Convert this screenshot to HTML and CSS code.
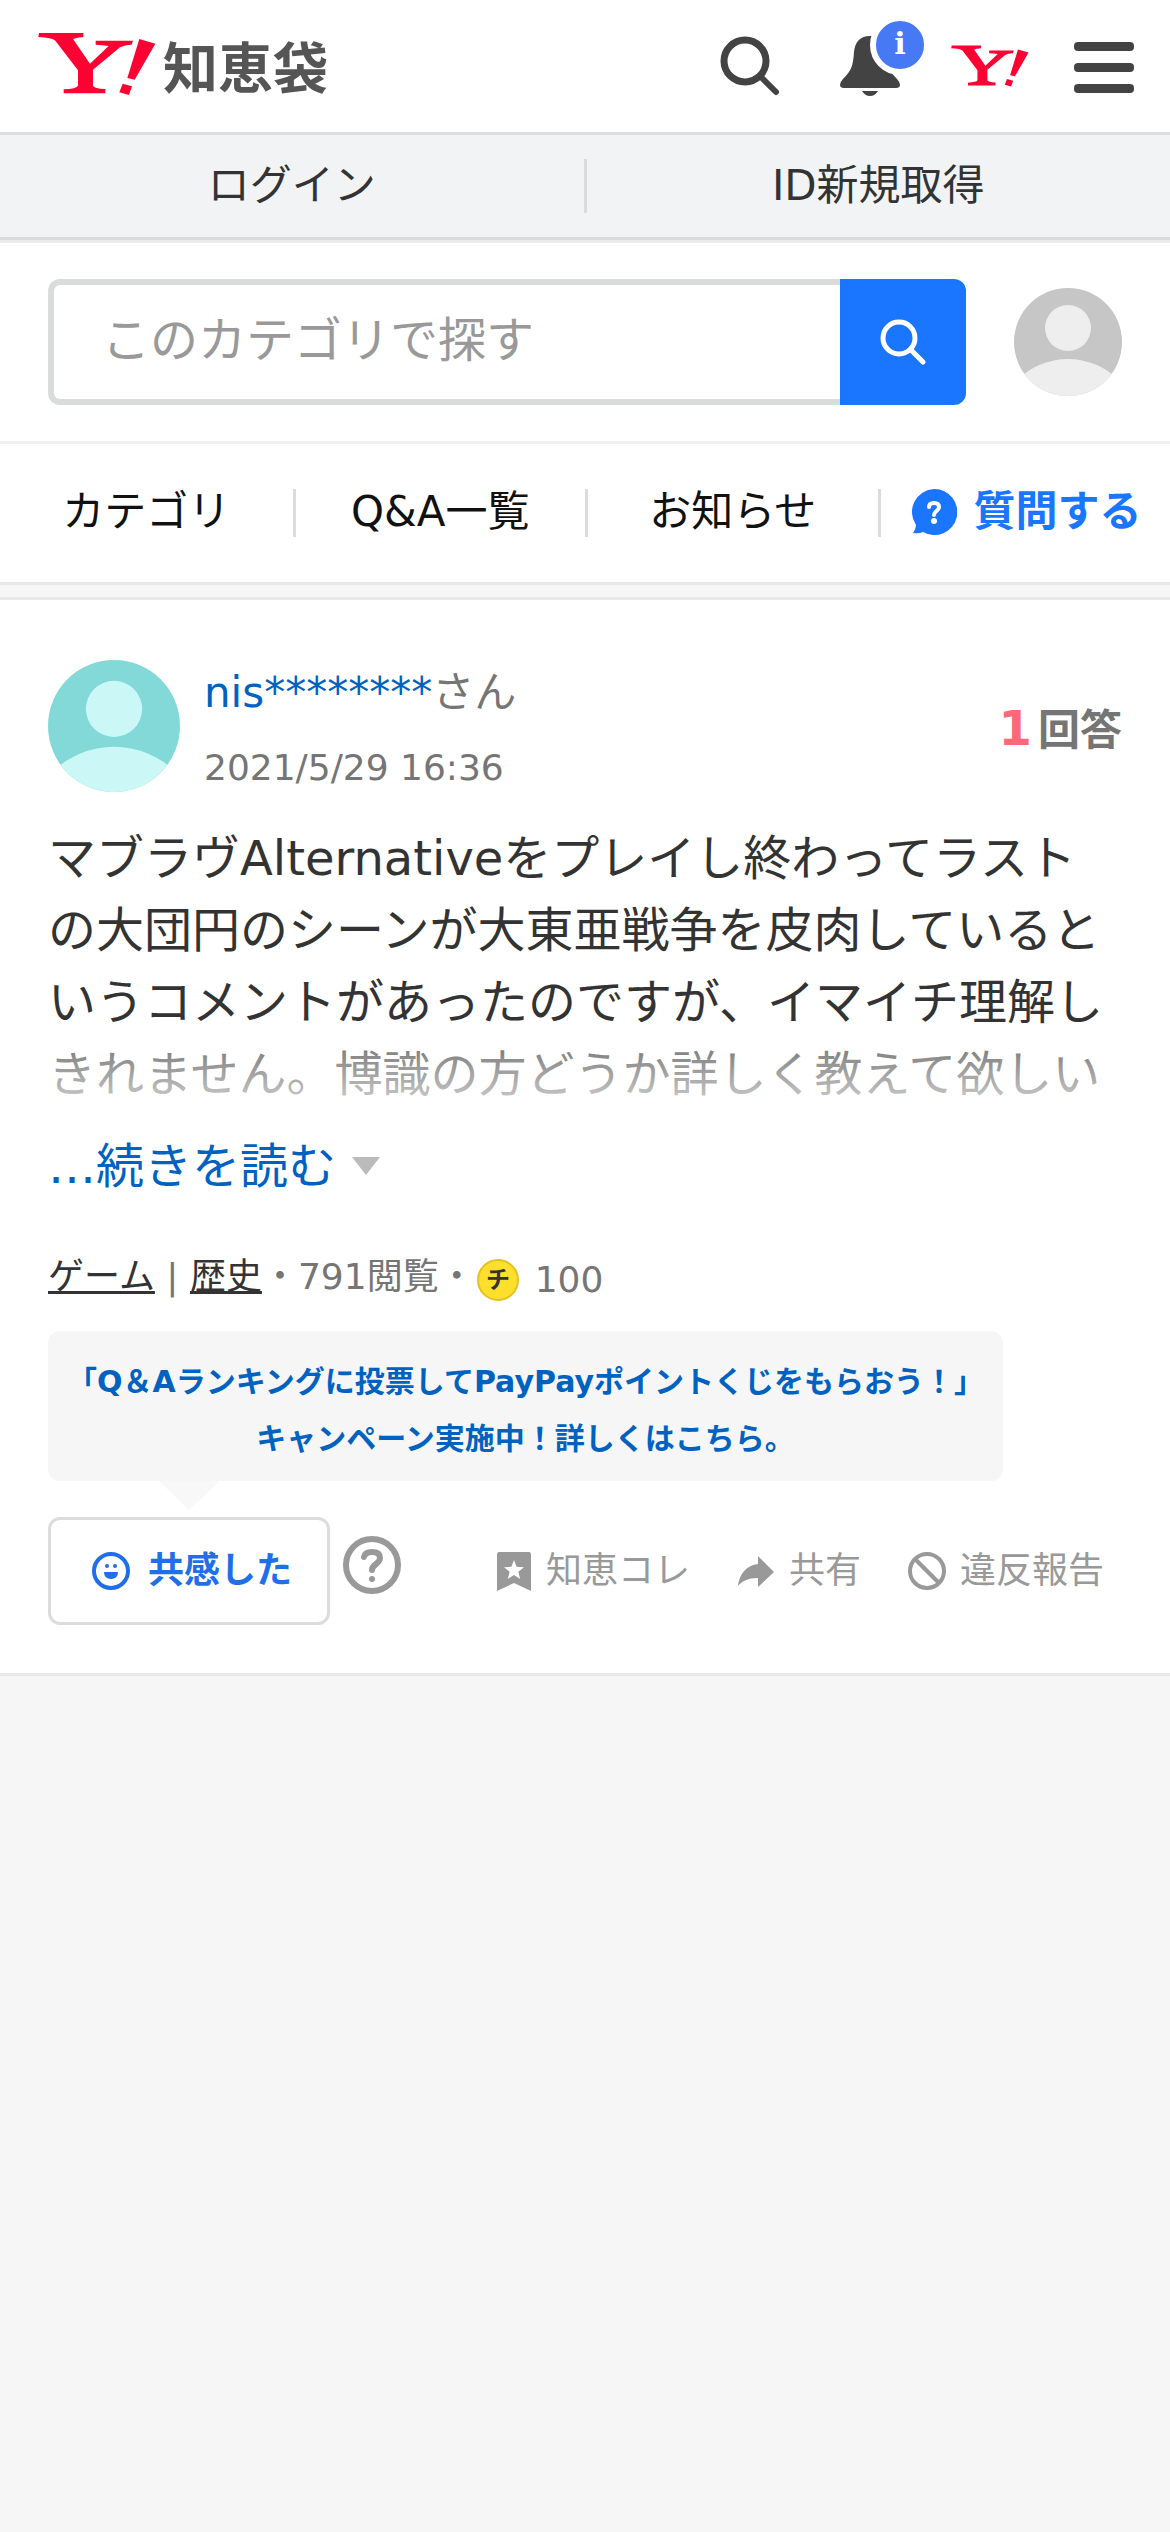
FILE: index.html
```html
<!DOCTYPE html>
<html lang="ja">
<head>
<meta charset="utf-8">
<meta name="viewport" content="width=device-width">
<title>Yahoo!知恵袋</title>
<link rel="stylesheet" href="styles.css">
</head>
<body>
<svg class="defs" aria-hidden="true">
  <symbol id="brand" viewBox="116 96 354 190">
    <path d="M119 98H252V110Q232 111 221 116L272 190L328 137Q308 134 289 133V121H401L397 133Q375 134 362 141L281 208V256Q284 264 318 266V279H193V267Q232 265 236 256V210L168 121Q158 112 117 110Z"/>
    <path d="M420 116L468 130L406 238L384 233Z"/>
    <path d="M370 250L398 258L389 284L360 276Z"/>
  </symbol>
  <symbol id="person" viewBox="0 0 108 108">
    <circle cx="54" cy="40" r="23"/>
    <circle cx="54" cy="143" r="72"/>
  </symbol>
</svg>

<header class="header">
  <a class="brand" href="#" aria-label="Yahoo!知恵袋">
    <svg class="brand-mark"><use href="#brand"/></svg>
    <span class="brand-name">知恵袋</span>
  </a>
  <button class="icon-button header-search" type="button" aria-label="検索">
    <svg width="60" height="60" viewBox="0 0 60 60" fill="none" stroke="#434343" stroke-linecap="round"><circle cx="25" cy="25" r="21" stroke-width="7"/><path d="M42 42L56 56" stroke-width="6"/></svg>
  </button>
  <button class="icon-button bell" type="button" aria-label="通知">
    <svg width="60" height="60" viewBox="0 0 60 60" fill="#434343"><path d="M30 0C20 0 15 6 14 16C13 29 12 34 3 43Q0 46 0 49Q0 52 4 52H56Q60 52 60 49Q60 46 57 43C48 34 47 29 46 16C45 6 40 0 30 0Z"/><path d="M22 55H38Q35 60 30 60Q25 60 22 55Z"/></svg>
    <span class="badge">i</span>
  </button>
  <a class="yahoo-link" href="#" aria-label="Yahoo! JAPAN"><svg width="78" height="42"><use href="#brand"/></svg></a>
  <button class="icon-button" type="button" aria-label="メニュー">
    <svg width="60" height="60" viewBox="0 0 60 60" fill="#434343"><rect y="6" width="60" height="9" rx="4"/><rect y="27" width="60" height="9" rx="4"/><rect y="48" width="60" height="9" rx="4"/></svg>
  </button>
</header>

<nav class="account">
  <a href="#">ログイン</a>
  <a href="#">ID新規取得</a>
</nav>

<div class="search-bar">
  <form class="search">
    <input class="search-input" type="search" placeholder="このカテゴリで探す" aria-label="このカテゴリで探す">
    <button class="search-submit" type="submit" aria-label="検索">
      <svg width="46" height="46" viewBox="0 0 46 46" fill="none" stroke="#fff" stroke-linecap="round"><circle cx="19" cy="19" r="16" stroke-width="5"/><path d="M32 32L43 43" stroke-width="5"/></svg>
    </button>
  </form>
  <a class="avatar avatar-small" href="#" aria-label="マイページ"><svg width="108" height="108"><use href="#person"/></svg></a>
</div>

<nav class="tabs">
  <a href="#">カテゴリ</a>
  <a href="#">Q&amp;A一覧</a>
  <a href="#">お知らせ</a>
  <a class="ask" href="#">
    <svg width="46" height="46" viewBox="0 0 46 46"><path fill="#1a75ff" d="M23 0A23 23 0 1 1 12 43Q8 45 2 44Q5 40 5 36A23 23 0 0 1 23 0Z"/><path d="M18 18Q18 14 23 14Q28 14 28 18Q28 20 25.500 22Q23 24 23 26" fill="none" stroke="#fff" stroke-width="4" stroke-linecap="round"/><circle cx="23" cy="32" r="3" fill="#fff"/></svg>
    質問する
  </a>
</nav>

<main class="card">
  <div class="asker">
    <div class="avatar avatar-large"><svg width="132" height="132"><use href="#person"/></svg></div>
    <div class="asker-info">
      <p class="asker-name"><a href="#">nis********</a>さん</p>
      <p class="asker-date">2021/5/29 16:36</p>
    </div>
    <p class="answers"><strong>1</strong>回答</p>
  </div>

  <p class="question">マブラヴAlternativeをプレイし終わってラストの大団円のシーンが大東亜戦争を皮肉しているというコメントがあったのですが、イマイチ理解しきれません。博識の方どうか詳しく教えて欲しい</p>
  <a class="more" href="#">…続きを読む<svg width="28" height="18" viewBox="0 0 28 18"><path fill="#bbb" d="M0 0H28L14 18Z"/></svg></a>

  <div class="meta">
    <span><a href="#">ゲーム</a> | <a href="#">歴史</a>・791閲覧・</span>
    <span class="coins">
      <svg width="42" height="42" viewBox="0 0 42 42"><circle cx="21" cy="21" r="20" fill="#fedf2e" stroke="#e3c21f" stroke-width="2"/><text x="21" y="29" text-anchor="middle" class="coin-text">チ</text></svg>
      100
    </span>
  </div>

  <a class="campaign" href="#">「Q＆Aランキングに投票してPayPayポイントくじをもらおう！」<br>キャンペーン実施中！詳しくはこちら。</a>

  <div class="actions">
    <button class="empathy" type="button">
      <svg width="38" height="38" viewBox="0 0 38 38" fill="#1f6fe8"><circle cx="19" cy="19" r="17" fill="none" stroke="#1f6fe8" stroke-width="4"/><circle cx="15" cy="14" r="2"/><circle cx="23" cy="14" r="2"/><path d="M12 20H26Q26 27 19 27Q12 27 12 20Z"/></svg>
      共感した
    </button>
    <button class="icon-button help" type="button" aria-label="ヘルプ">
      <svg width="58" height="58" viewBox="0 0 58 58" fill="none" stroke="#999"><circle cx="29" cy="29" r="26" stroke-width="6"/><path d="M21 21Q22 16 29 16Q37 16 37 22Q37 25 33 28Q29 31 29 34" stroke-width="6" stroke-linecap="round"/><circle cx="29" cy="43" r="3" fill="#999" stroke="none"/></svg>
    </button>
    <div class="tools">
      <button class="tool" type="button">
        <svg width="39" height="39" viewBox="0 0 39 39"><path fill="#999" d="M5 0H35Q37 0 37 3V39L20 31L3 39V3Q3 0 5 0Z"/><path fill="#fff" d="M20 8L22.600 14.800L30 15.200L24.300 19.800L26.200 27L20 23L13.800 27L15.700 19.800L10 15.200L17.400 14.800Z"/></svg>
        知恵コレ
      </button>
      <button class="tool" type="button">
        <svg width="39" height="39" viewBox="0 0 39 39"><path fill="#999" d="M21 4L37 20L21 35V26C11 26 5 29 1 34C2 22 10 13 21 12Z"/></svg>
        共有
      </button>
      <button class="tool" type="button">
        <svg width="39" height="39" viewBox="0 0 39 39" fill="none" stroke="#999" stroke-width="4"><circle cx="19" cy="19" r="17"/><path d="M7 7L31 31"/></svg>
        違反報告
      </button>
    </div>
  </div>
</main>
</body>
</html>
```

FILE: styles.css
```css
* {
  box-sizing: border-box;
}

body {
  margin: 0;
  background: #f6f6f6;
  color: #333;
  font-family: "DejaVu Sans", "Noto Sans CJK JP", sans-serif;
  font-size: 42px;
}

a {
  color: inherit;
  text-decoration: none;
}

p {
  margin: 0;
}

button,
input {
  font: inherit;
}

svg {
  display: block;
  flex: none;
}

.defs {
  position: absolute;
  width: 0;
  height: 0;
}

.icon-button {
  position: relative;
  padding: 0;
  border: 0;
  background: none;
}

.header {
  display: flex;
  align-items: center;
  height: 135px;
  padding: 0 36px;
  background: #fff;
  border-bottom: 3px solid #dadddd;
}

.brand {
  display: flex;
  align-items: center;
  gap: 7px;
  margin-right: auto;
  padding: 0 0 4px 2px;
}

.brand-mark {
  width: 118px;
  height: 64px;
  fill: #ff0033;
}

.brand-name {
  color: #555;
  font-family: "Noto Sans CJK JP", sans-serif;
  font-size: 55px;
  font-weight: 700;
  line-height: 64px;
}

.header-search {
  margin-right: 60px;
}

.bell {
  margin-right: 51px;
}

.badge {
  position: absolute;
  top: -21px;
  right: -30px;
  width: 60px;
  height: 60px;
  border: 6px solid #fff;
  border-radius: 50%;
  background: #4779f5;
  color: #fff;
  font-family: "DejaVu Serif", serif;
  font-size: 30px;
  font-weight: 700;
  line-height: 46px;
  text-align: center;
}

.yahoo-link {
  margin-right: 45px;
  fill: #ff0033;
}

.account {
  display: flex;
  align-items: center;
  height: 108px;
  padding-bottom: 3px;
  background: #f1f3f5;
  border-bottom: 3px solid #ececec;
  box-shadow: inset 0 -3px #dadcdc;
}

.account a {
  flex: 1;
  line-height: 54px;
  text-align: center;
}

.account a + a {
  border-left: 3px solid #dadcdc;
}

.search-bar {
  display: flex;
  align-items: center;
  gap: 48px;
  padding: 36px 48px;
  background: #fff;
  border-bottom: 3px solid #f0f0f0;
}

.search {
  display: flex;
  flex: 1;
  height: 126px;
}

.search-input {
  flex: 1;
  min-width: 0;
  padding: 0 48px 4px;
  border: 6px solid #dadcdc;
  border-right: 0;
  border-radius: 12px 0 0 12px;
  background: #fff;
  font-size: 48px;
  appearance: none;
}

.search-input::placeholder {
  color: #999;
}

.search-submit {
  display: flex;
  align-items: center;
  justify-content: center;
  width: 126px;
  padding: 0;
  border: 0;
  border-radius: 0 12px 12px 0;
  background: #1a75ff;
}

.avatar {
  overflow: hidden;
  border-radius: 50%;
}

.avatar-small {
  background: #c6c6c6;
  fill: #eee;
}

.avatar-large {
  background: #83d9d8;
  fill: #cbf7f7;
}

.tabs {
  display: grid;
  grid-template-columns: repeat(4, 1fr);
  padding: 45px 0;
  background: #fff;
  border-bottom: 3px solid #e8e8e8;
  color: #111;
}

.tabs a {
  height: 48px;
  line-height: 46px;
  text-align: center;
}

.tabs a + a {
  border-left: 3px solid #dcdcdc;
}

.tabs .ask {
  display: flex;
  gap: 17px;
  padding-left: 30px;
  color: #1a75ff;
  font-weight: 700;
  white-space: nowrap;
}

.card {
  margin-top: 12px;
  padding: 48px;
  background: #fff;
  border-top: 3px solid #e8e8e8;
  border-bottom: 3px solid #e8e8e8;
}

.asker {
  display: flex;
  align-items: center;
  gap: 24px;
  color: #757575;
}

.asker-info {
  flex: 1;
  padding-top: 6px;
}

.asker-name {
  line-height: 78px;
}

.asker-name a {
  color: #0062c0;
}

.asker-date {
  font-size: 36px;
  line-height: 72px;
}

.answers {
  display: flex;
  align-items: baseline;
  gap: 6px;
  font-weight: 700;
}

.answers strong {
  color: #ff6878;
  font-size: 48px;
}

.question {
  position: relative;
  margin-top: 18px;
  font-size: 48px;
  line-height: 72px;
}

.question::after {
  content: "";
  position: absolute;
  right: 0;
  bottom: 0;
  left: 0;
  height: 72px;
  background: linear-gradient(rgba(255, 255, 255, 0.3), rgba(255, 255, 255, 0.8));
}

.more {
  display: flex;
  align-items: center;
  gap: 16px;
  margin-top: 20px;
  color: #0062c0;
  font-size: 48px;
  line-height: 72px;
}

.meta {
  display: flex;
  align-items: center;
  margin-top: 45px;
  color: #757575;
  font-size: 36px;
  line-height: 54px;
}

.meta a {
  color: #333;
  text-decoration: underline;
}

.coins {
  display: flex;
  align-items: center;
  gap: 16px;
  padding: 6px 0 0 2px;
}

.coin-text {
  fill: #333;
  font-family: "Noto Sans CJK JP", sans-serif;
  font-size: 24px;
  font-weight: 700;
}

.campaign {
  position: relative;
  display: block;
  width: fit-content;
  margin-top: 24px;
  padding: 22px 19px 14px;
  border-radius: 12px;
  background: #f6f6f6;
  color: #0062c0;
  font-size: 30px;
  font-weight: 700;
  line-height: 57px;
  text-align: center;
}

.campaign::after {
  content: "";
  position: absolute;
  top: 100%;
  left: 111px;
  border: solid transparent;
  border-width: 29px 30px 0;
  border-top-color: #f8f8f8;
}

.actions {
  display: flex;
  align-items: center;
  margin-top: 36px;
}

.empathy {
  display: flex;
  align-items: center;
  gap: 18px;
  height: 108px;
  padding: 0 35px 0 41px;
  border: 3px solid #dcdcdc;
  border-radius: 12px;
  background: #fff;
  color: #1f6fe8;
  font-size: 36px;
  font-weight: 700;
  line-height: 36px;
}

.help {
  margin: 0 0 12px 13px;
}

.tools {
  display: flex;
  gap: 47px;
  margin-left: auto;
  padding-right: 18px;
}

.tool {
  display: flex;
  align-items: center;
  gap: 13px;
  padding: 0;
  border: 0;
  background: none;
  color: #999;
  font-size: 36px;
  line-height: 36px;
}
```
